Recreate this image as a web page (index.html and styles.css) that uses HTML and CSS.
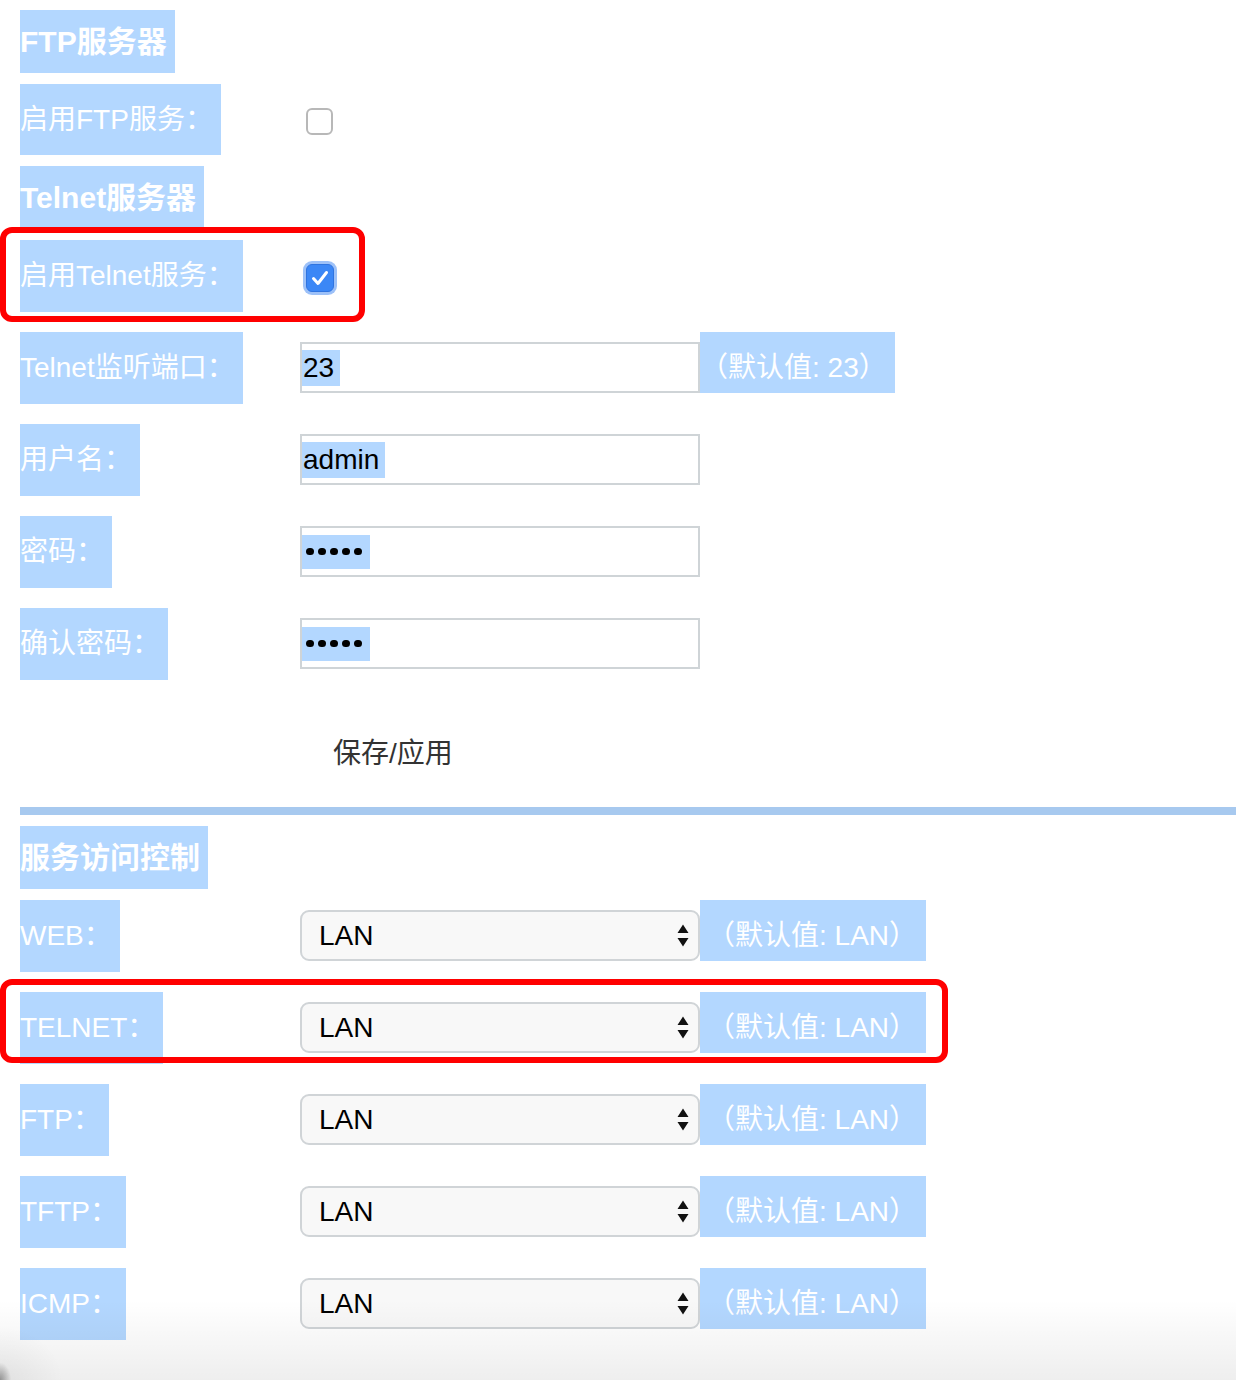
FILE: index.html
```html
<!DOCTYPE html>
<html lang="zh-CN">
<head>
<meta charset="utf-8">
<title>服务设置</title>
<link rel="stylesheet" href="styles.css">
</head>
<body>
<div class="page">
  <div class="head first"><span class="hl">FTP服务器</span></div>
  <div class="row tight short">
    <div class="label"><span class="hl">启用FTP服务：</span></div>
    <div class="ctrl"><span class="checkbox"></span></div>
  </div>

  <div class="head"><span class="hl">Telnet服务器</span></div>
  <div class="row tight">
    <div class="label"><span class="hl">启用Telnet服务：</span></div>
    <div class="ctrl">
      <span class="checkbox checked">
        <svg width="28" height="28" viewBox="0 0 28 28"><path d="M7.5 14.5 L12 19.5 L20.5 8.5" fill="none" stroke="#fff" stroke-width="3" stroke-linecap="round" stroke-linejoin="round"/></svg>
      </span>
    </div>
  </div>

  <div class="row">
    <div class="label"><span class="hl">Telnet监听端口：</span></div>
    <div class="ctrl"><div class="input"><span class="val">23</span></div></div>
    <div class="hint">（默认值: 23）</div>
  </div>
  <div class="row">
    <div class="label"><span class="hl">用户名：</span></div>
    <div class="ctrl"><div class="input"><span class="val">admin</span></div></div>
  </div>
  <div class="row">
    <div class="label"><span class="hl">密码：</span></div>
    <div class="ctrl"><div class="input"><span class="val dots"><i></i><i></i><i></i><i></i><i></i></span></div></div>
  </div>
  <div class="row">
    <div class="label"><span class="hl">确认密码：</span></div>
    <div class="ctrl"><div class="input"><span class="val dots"><i></i><i></i><i></i><i></i><i></i></span></div></div>
  </div>

  <div class="actions"><button class="btn" type="button">保存/应用</button></div>
  <div class="divider"></div>

  <div class="head"><span class="hl">服务访问控制</span></div>
  <div class="row tight">
    <div class="label"><span class="hl">WEB：</span></div>
    <div class="ctrl"><div class="select"><span>LAN</span><svg class="arrows" width="14" height="26" viewBox="0 0 14 26"><path d="M1.5 10 L7 1.5 L12.5 10 Z M1.5 15 L12.5 15 L7 23.5 Z" fill="#111"/></svg></div></div>
    <div class="hint lan">（默认值: LAN）</div>
  </div>
  <div class="row">
    <div class="label"><span class="hl">TELNET：</span></div>
    <div class="ctrl"><div class="select"><span>LAN</span><svg class="arrows" width="14" height="26" viewBox="0 0 14 26"><path d="M1.5 10 L7 1.5 L12.5 10 Z M1.5 15 L12.5 15 L7 23.5 Z" fill="#111"/></svg></div></div>
    <div class="hint lan">（默认值: LAN）</div>
  </div>
  <div class="row">
    <div class="label"><span class="hl">FTP：</span></div>
    <div class="ctrl"><div class="select"><span>LAN</span><svg class="arrows" width="14" height="26" viewBox="0 0 14 26"><path d="M1.5 10 L7 1.5 L12.5 10 Z M1.5 15 L12.5 15 L7 23.5 Z" fill="#111"/></svg></div></div>
    <div class="hint lan">（默认值: LAN）</div>
  </div>
  <div class="row">
    <div class="label"><span class="hl">TFTP：</span></div>
    <div class="ctrl"><div class="select"><span>LAN</span><svg class="arrows" width="14" height="26" viewBox="0 0 14 26"><path d="M1.5 10 L7 1.5 L12.5 10 Z M1.5 15 L12.5 15 L7 23.5 Z" fill="#111"/></svg></div></div>
    <div class="hint lan">（默认值: LAN）</div>
  </div>
  <div class="row">
    <div class="label"><span class="hl">ICMP：</span></div>
    <div class="ctrl"><div class="select"><span>LAN</span><svg class="arrows" width="14" height="26" viewBox="0 0 14 26"><path d="M1.5 10 L7 1.5 L12.5 10 Z M1.5 15 L12.5 15 L7 23.5 Z" fill="#111"/></svg></div></div>
    <div class="hint lan">（默认值: LAN）</div>
  </div>
</div>

<div class="mark mark-telnet"></div>
<div class="mark mark-access"></div>
<div class="shade"></div>
</body>
</html>
```

FILE: styles.css
```css
html, body {
  margin: 0;
  padding: 0;
  background: #ffffff;
}
body {
  font-family: "Liberation Sans", "Noto Sans CJK SC", sans-serif;
  font-size: 28px;
  color: #000;
  width: 1236px;
  height: 1380px;
  overflow: hidden;
  position: relative;
}
.page {
  padding: 10px 0 0 20px;
}
.hl {
  display: inline-block;
  background: #b3d7ff;
  color: #ffffff;
  white-space: nowrap;
}
.head {
  margin-top: 11px;
  height: 63px;
}
.head.first {
  margin-top: 0;
}
.head .hl {
  height: 63px;
  line-height: 63px;
  font-size: 30px;
  font-weight: bold;
  padding-right: 8px;
}
.row {
  display: flex;
  align-items: flex-start;
  height: 72px;
  margin-top: 20px;
}
.row.tight {
  margin-top: 11px;
}
.row.short {
  height: 71px;
}
.label {
  width: 280px;
  flex: none;
}
.label .hl {
  height: 72px;
  line-height: 72px;
  font-size: 28px;
  padding-right: 8px;
}
.row.short .label .hl {
  height: 71px;
  line-height: 71px;
}
.ctrl {
  width: 400px;
  flex: none;
}
.checkbox {
  display: block;
  box-sizing: border-box;
  width: 27px;
  height: 27px;
  margin: 24px 0 0 6px;
  border: 2px solid #b8b8b8;
  border-radius: 6px;
  background: #fff;
}
.checkbox.checked {
  width: 28px;
  height: 28px;
  border: 1.5px solid #2f74e0;
  background: #3b87f6;
  box-shadow: 0 0 0 3px rgba(105, 160, 245, 0.65);
}
.checkbox.checked svg {
  display: block;
  margin: -1.5px 0 0 -1.5px;
}
.input {
  box-sizing: border-box;
  margin-top: 10px;
  width: 400px;
  height: 51px;
  border: 2px solid #cfd4d7;
  background: #fff;
  display: flex;
  align-items: center;
}
.val {
  display: inline-block;
  background: #b3d7ff;
  height: 36px;
  line-height: 36px;
  font-size: 28px;
  color: #000;
  padding: 0 6px 0 1px;
}
.dots {
  display: inline-flex;
  align-items: center;
  gap: 4.5px;
  height: 34px;
  padding: 0 8px 0 4px;
}
.dots i {
  display: block;
  width: 7.5px;
  height: 7.5px;
  border-radius: 50%;
  background: #000;
}
.hint {
  box-sizing: border-box;
  height: 61px;
  padding: 16px 8px 0 0;
  line-height: 40px;
  font-size: 28px;
  background: #b3d7ff;
  color: #ffffff;
  white-space: nowrap;
}
.hint.lan {
  padding-left: 7px;
  padding-right: 9px;
}
.select {
  box-sizing: border-box;
  margin-top: 10px;
  width: 400px;
  height: 51px;
  border: 2px solid #d0d4d7;
  border-radius: 9px;
  background: #f8f8f8;
  display: flex;
  align-items: center;
  padding: 0 8px 0 17px;
  font-size: 28px;
  color: #000;
}
.select span {
  flex: 1;
}
.arrows {
  display: block;
  flex: none;
}
.actions {
  height: 127px;
  box-sizing: border-box;
  padding: 54px 0 0 313px;
}
.btn {
  display: block;
  margin: 0;
  padding: 0;
  border: 0;
  background: transparent;
  font-family: "Liberation Sans", "Noto Sans CJK SC", sans-serif;
  font-size: 28px;
  line-height: 40px;
  height: 40px;
  color: #333;
}
.divider {
  height: 8px;
  background: #a7c9ef;
}
.mark {
  position: absolute;
  box-sizing: border-box;
  border: 6px solid #ff0000;
  border-radius: 12px;
  pointer-events: none;
}
.mark-telnet {
  left: 0;
  top: 227px;
  width: 365px;
  height: 95px;
}
.mark-access {
  left: 0;
  top: 979px;
  width: 948px;
  height: 84px;
}
.shade {
  position: absolute;
  left: 0;
  right: 0;
  bottom: 0;
  height: 80px;
  pointer-events: none;
  background:
    radial-gradient(ellipse 14px 22px at 0 100%, rgba(0,0,0,0.35), rgba(0,0,0,0) 80%),
    radial-gradient(ellipse 70px 60px at 0 100%, rgba(0,0,0,0.06), rgba(0,0,0,0) 90%),
    linear-gradient(to bottom, rgba(0,0,0,0), rgba(0,0,0,0.065));
}
```
